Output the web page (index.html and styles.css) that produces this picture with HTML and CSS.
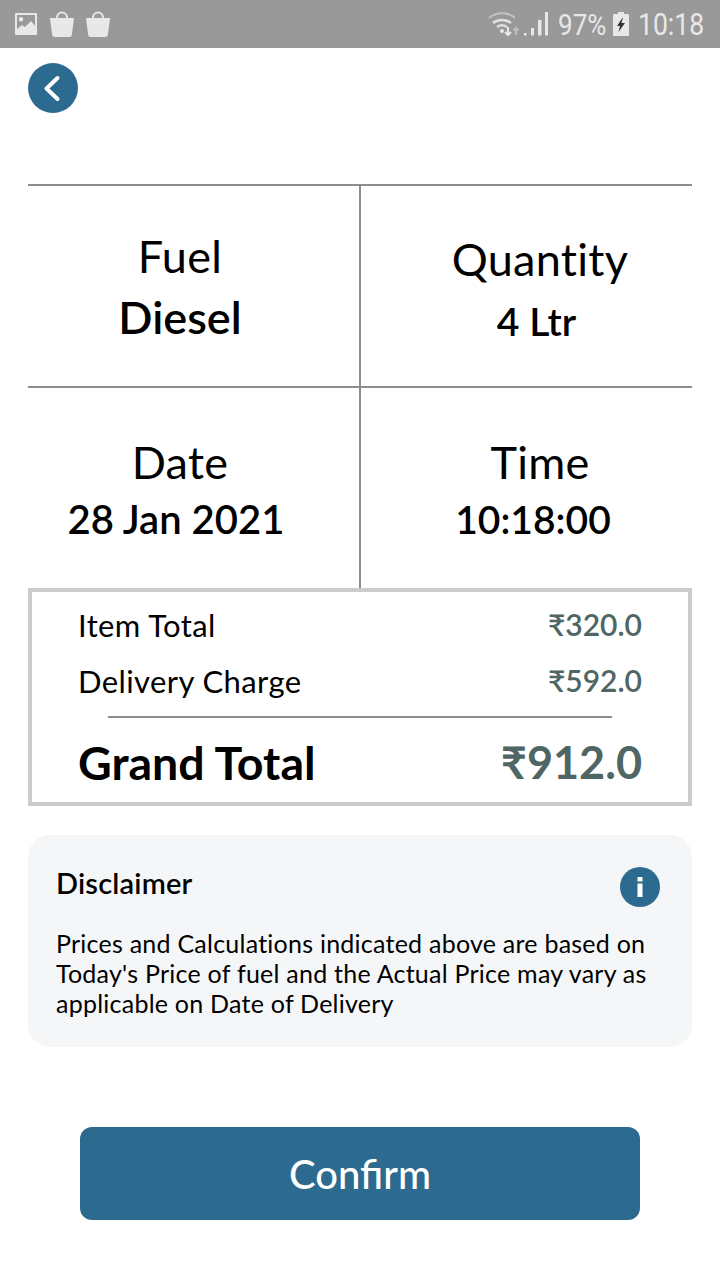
FILE: index.html
```html
<!DOCTYPE html>
<html lang="en">
<head>
<meta charset="utf-8">
<title>Confirm order</title>
<link rel="stylesheet" href="styles.css">
</head>
<body>
<div class="status">
  <div class="status-left">
    <svg width="24" height="24" viewBox="0 0 24 24"><path fill="#e8e8e8" fill-rule="evenodd" d="M2 1h20a1 1 0 0 1 1 1v20a1 1 0 0 1-1 1H2a1 1 0 0 1-1-1V2a1 1 0 0 1 1-1zm1 2v14l5-4 3 2 6-6 4 5V3zM7 5a2.200 2.200 0 1 1 0 4.400a2.200 2.200 0 0 1 0-4.400z"/></svg>
    <svg width="24" height="26" viewBox="0 0 24 26"><path fill="none" stroke="#e8e8e8" stroke-width="2" d="M7 9V6.500a5 5 0 0 1 10 0V9"/><path fill="#e8e8e8" d="M0 7h24l-2 16a3 3 0 0 1-3 3H5a3 3 0 0 1-3-3z"/></svg>
    <svg width="24" height="26" viewBox="0 0 24 26"><path fill="none" stroke="#e8e8e8" stroke-width="2" d="M7 9V6.500a5 5 0 0 1 10 0V9"/><path fill="#e8e8e8" d="M0 7h24l-2 16a3 3 0 0 1-3 3H5a3 3 0 0 1-3-3z"/></svg>
  </div>
  <div class="status-right">
    <svg width="62" height="26" viewBox="0 0 62 26"><g fill="none" stroke="#e0e0e0"><path stroke-width="2" opacity=".6" d="M1 7c7-6.500 19-6.500 26 0"/><path stroke-width="2.500" d="M5 12c5-4 13-4 18 0M9 16c3-2 7-2 10 0"/></g><circle cx="14" cy="20" r="2" fill="#e8e8e8"/><path stroke="#e8e8e8" stroke-width="2" fill="none" d="M20 16v8m-3-3 3 3 3-3"/><path stroke="#bdbdbd" stroke-width="2" fill="none" d="M28 24v-7m-2.500 2.500 2.500-2.500 2.500 2.500"/><path fill="#e8e8e8" d="M36 22h2.500v2.500H36zM43 17h3v7.500h-3zM50 9h3.500v15.500H50zM57 1h3v23.500h-3z"/></svg>
    <span class="pct"><span class="squeeze">97%</span></span>
    <svg class="batt" width="16" height="24" viewBox="0 0 16 24"><path fill="#e8e8e8" d="M5 0h6v2h4a1 1 0 0 1 1 1v20a1 1 0 0 1-1 1H1a1 1 0 0 1-1-1V3a1 1 0 0 1 1-1h4z"/><path fill="#333" d="M10 5 4 14h3l-1.500 6L12 11H8.500z"/></svg>
    <span class="clock"><span class="squeeze">10:18</span></span>
  </div>
</div>

<main class="page">
  <div class="back"><svg width="50" height="50" viewBox="0 0 50 50"><path fill="none" stroke="#fff" stroke-width="4" stroke-linecap="round" stroke-linejoin="round" d="M29.500 15 18.500 25.500 29.500 36"/></svg></div>

  <section class="grid">
    <div class="cell cell-tl"><div class="lab">Fuel</div><div class="val val-big">Diesel</div></div>
    <div class="cell cell-tr"><div class="lab">Quantity</div><div class="val">4 Ltr</div></div>
    <div class="cell cell-bl"><div class="lab">Date</div><div class="val">28 Jan 2021</div></div>
    <div class="cell cell-br"><div class="lab">Time</div><div class="val">10:18:00</div></div>
  </section>

  <section class="bill">
    <div class="row"><span class="name">Item Total</span><span class="amt">₹320.0</span></div>
    <div class="row"><span class="name">Delivery Charge</span><span class="amt">₹592.0</span></div>
    <hr class="rule">
    <div class="row row-total"><span class="gname">Grand Total</span><span class="gamt">₹912.0</span></div>
  </section>

  <section class="note">
    <div class="note-head"><h2>Disclaimer</h2><span class="info"><svg width="40" height="40" viewBox="0 0 40 40"><rect x="17.500" y="10" width="5" height="4.500" fill="#fff"/><rect x="17.500" y="16.500" width="5" height="13.500" fill="#fff"/></svg></span></div>
    <p>Prices and Calculations indicated above are based on Today's Price of fuel and the Actual Price may vary as applicable on Date of Delivery</p>
  </section>

  <button class="confirm">Confirm</button>
</main>
</body>
</html>
```
FILE: styles.css
```css
* { box-sizing: border-box; }
html, body { margin: 0; padding: 0; }
body { width: 720px; height: 1280px; background: #fff; color: #000; font-family: Lato, "Noto Sans", sans-serif; font-variant-ligatures: none; overflow: hidden; }

.status { height: 48px; background: #999; display: flex; justify-content: space-between; align-items: center; padding: 0 17px 0 14px; color: #e8e8e8; font-family: Roboto, sans-serif; }
.status-left { display: flex; gap: 12px; align-items: center; }
.status-right { display: flex; align-items: center; }
.squeeze { display: inline-block; transform-origin: left center; transform: scaleX(.87); white-space: nowrap; }
.pct { font-size: 30px; margin-left: 8px; width: 47px; }
.batt { margin: 0 9px 0 8px; }
.clock { font-size: 32px; width: 65px; }
.clock .squeeze { transform: scaleX(.83); }

.page { padding: 15px 28px 0; }
.back { width: 50px; height: 50px; border-radius: 50%; background: #2d6a8f; }

.grid { margin-top: 71px; display: grid; grid-template-columns: 333px 331px; grid-template-rows: 202px 200px; border-top: 2px solid #8c8c8c; }
.cell { display: flex; flex-direction: column; align-items: center; }
.cell-tl, .cell-bl { border-right: 2px solid #8c8c8c; padding-right: 27px; }
.cell-tr, .cell-br { padding-left: 27px; }
.cell-tl, .cell-tr { border-bottom: 2px solid #8c8c8c; }
.cell-tl { padding-top: 41px; }
.cell-tr { padding-top: 44px; }
.cell-bl, .cell-br { padding-top: 45px; }
.lab { font-size: 45px; line-height: 58px; letter-spacing: .3px; }
.val { font-size: 40px; line-height: 60px; font-weight: 600; }
.val-big { font-size: 45px; margin-top: 2px; }
.cell-tr .val { font-size: 39px; margin-top: 3px; padding-right: 7px; }
.cell-bl .val { margin-top: -2px; padding-right: 8px; }
.cell-br .val { margin-top: -2px; padding-right: 14px; font-size: 39px; }

.bill { height: 218px; border: 4px solid #ccc; padding: 5px 46px 0; }
.row { display: flex; justify-content: space-between; align-items: center; height: 56px; }
.name { font-size: 31px; letter-spacing: .4px; }
.amt { font-size: 30px; font-weight: 600; color: #4f6664; margin-bottom: 2px; }
.rule { margin: 7px 30px 0; border: 0; height: 2px; background: #8c8c8c; }
.row-total { height: 88px; }
.gname { font-size: 46.500px; font-weight: 700; }
.gamt { font-size: 45px; font-weight: 700; color: #4f6664; }

.note { margin-top: 29px; height: 212px; border-radius: 22px; background: #f5f6f8; padding: 28px 32px 0 28px; }
.note-head { display: flex; justify-content: space-between; align-items: flex-start; }
.note h2 { margin: 0; font-size: 29px; line-height: 40px; font-weight: 600; letter-spacing: .2px; }
.info { width: 40px; height: 40px; border-radius: 50%; background: #2d6a8f; margin-top: 4px; }
.note p { margin: 21px 0 0; font-size: 25px; line-height: 30px; letter-spacing: .24px; }

.confirm { display: block; width: 560px; height: 93px; margin: 80px 0 0 52px; border: 0; border-radius: 12px; background: #2d6a8f; color: #fff; font: 500 40px Lato, sans-serif; }
```
